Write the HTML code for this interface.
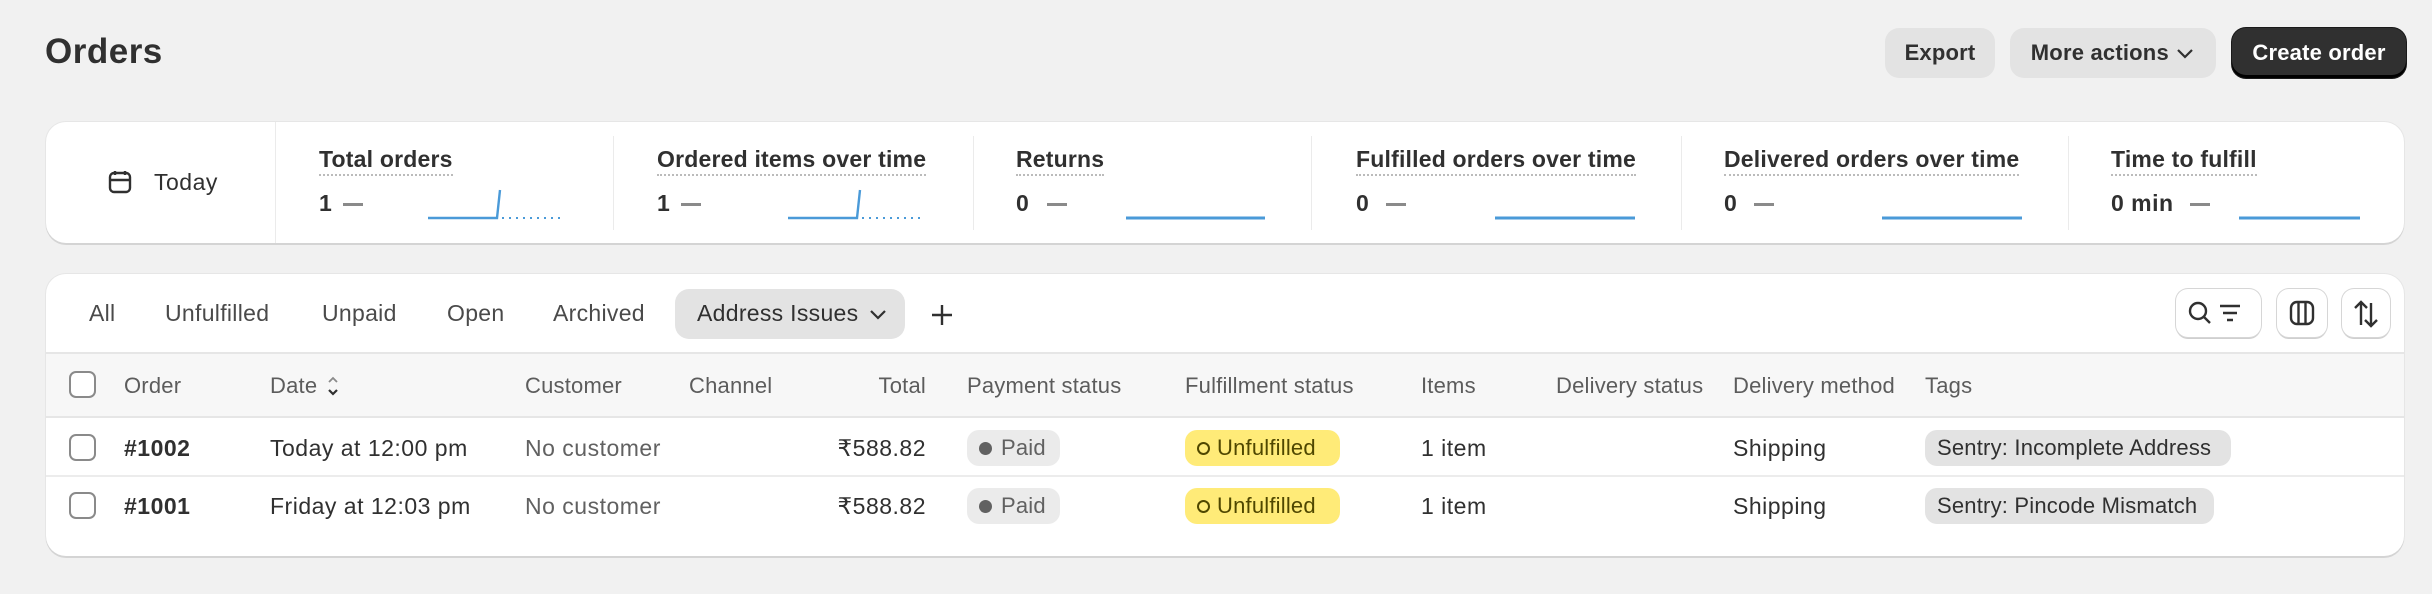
<!DOCTYPE html>
<html><head><meta charset="utf-8"><style>
*{box-sizing:border-box;margin:0;padding:0}
body{width:2432px;height:594px;background:#f1f1f1;font-family:"Liberation Sans",sans-serif;color:#303030;position:relative;overflow:hidden;letter-spacing:0.5px}
.a{position:absolute;white-space:nowrap}
.btn{position:absolute;top:28px;height:50px;border-radius:14px;background:#e3e3e3;font-size:22px;font-weight:bold;color:#303030;display:flex;align-items:center;justify-content:center;letter-spacing:0.2px}
.card{position:absolute;left:46px;width:2358px;background:#fff;border-radius:20px;box-shadow:0 2px 0 #d4d4d4,0 0 0 1px #e6e6e6}
.lab{position:absolute;top:147px;font-size:23px;font-weight:bold;color:#303030;border-bottom:2px dotted #bbb;padding-bottom:2px;line-height:25px;letter-spacing:0.2px}
.val{position:absolute;top:190px;font-size:23px;font-weight:bold;line-height:26px}
.dash{position:absolute;top:203px;width:20px;height:3px;background:#8a8a8a}
.div{position:absolute;top:136px;width:1px;height:94px;background:#ebebeb}
.tab{position:absolute;top:300px;font-size:23px;color:#4a4a4a;line-height:26px;letter-spacing:0.3px}
.th{position:absolute;top:373px;font-size:22px;color:#5c5c5c;line-height:26px;letter-spacing:0.2px}
.td{position:absolute;font-size:23px;color:#303030;line-height:26px}
.cb{position:absolute;left:69px;width:27px;height:27px;border:2px solid #8a8a8a;border-radius:7px;background:#fff}
.bdg{position:absolute;height:36px;border-radius:12px;font-size:22px;display:flex;align-items:center;padding:0 12px;letter-spacing:0.2px}
.ib{position:absolute;top:289px;height:48px;border-radius:12px;background:#fff;box-shadow:0 0 0 1px #d6d6d6,0 2px 0 #cfcfcf}
</style></head><body>
<div class="a" style="left:45px;top:32px;font-size:35px;font-weight:bold;color:#303030">Orders</div>
<div class="btn" style="left:1885px;width:110px">Export</div>
<div class="btn" style="left:2010px;width:206px">More actions&nbsp;<svg width="20" height="14" viewBox="0 0 20 14"><path d="M3 4l7 7 7-7" fill="none" stroke="#303030" stroke-width="2.2"/></svg></div>
<div class="btn" style="left:2232px;width:174px;background:#303030;color:#fff;box-shadow:inset 0 -3px 0 #000,0 0 0 1px #1a1a1a">Create order</div>

<div class="card" style="top:122px;height:121px"></div>
<div class="a" style="left:275px;top:122px;width:1px;height:121px;background:#ebebeb"></div>
<svg class="a" style="left:107px;top:169px" width="26" height="26" viewBox="0 0 26 26"><rect x="3" y="4" width="20" height="19" rx="4" fill="none" stroke="#303030" stroke-width="2.4"/><path d="M3 11h20M8 2v4M18 2v4" stroke="#303030" stroke-width="2.4"/></svg>
<div class="a" style="left:154px;top:169px;font-size:23px;color:#303030">Today</div>
<div class="div" style="left:613px"></div><div class="div" style="left:973px"></div><div class="div" style="left:1311px"></div><div class="div" style="left:1681px"></div><div class="div" style="left:2068px"></div>
<div class="lab" style="left:319px">Total orders</div>
<div class="lab" style="left:657px">Ordered items over time</div>
<div class="lab" style="left:1016px">Returns</div>
<div class="lab" style="left:1356px">Fulfilled orders over time</div>
<div class="lab" style="left:1724px">Delivered orders over time</div>
<div class="lab" style="left:2111px">Time to fulfill</div>
<div class="val" style="left:319px">1</div><div class="dash" style="left:343px"></div>
<div class="val" style="left:657px">1</div><div class="dash" style="left:681px"></div>
<div class="val" style="left:1016px">0</div><div class="dash" style="left:1047px"></div>
<div class="val" style="left:1356px">0</div><div class="dash" style="left:1386px"></div>
<div class="val" style="left:1724px">0</div><div class="dash" style="left:1754px"></div>
<div class="val" style="left:2111px">0 min</div><div class="dash" style="left:2190px"></div>
<svg class="a" style="left:0;top:0" width="2432" height="260">
<g stroke="#4a9ad8" fill="none" stroke-width="2.4">
<path d="M428 218H497L500 190"/><path d="M502 218H564" stroke-dasharray="2 5" stroke-width="2"/>
<path d="M788 218H857L860 190"/><path d="M862 218H924" stroke-dasharray="2 5" stroke-width="2"/>
<path d="M1126 218H1265M1495 218H1635M1882 218H2022M2239 218H2360" stroke-width="3"/>
</g></svg>

<div class="card" style="top:274px;height:282px;overflow:hidden">
<div style="position:absolute;left:0;top:78px;width:100%;height:66px;background:#f7f7f7;border-top:2px solid #e6e6e6;border-bottom:2px solid #e6e6e6"></div>
<div style="position:absolute;left:0;top:201px;width:100%;height:2px;background:#ececec"></div>
</div>
<div class="a" style="left:675px;top:289px;width:230px;height:50px;border-radius:14px;background:#e3e3e3"></div>
<div class="tab" style="left:89px">All</div>
<div class="tab" style="left:165px">Unfulfilled</div>
<div class="tab" style="left:322px">Unpaid</div>
<div class="tab" style="left:447px">Open</div>
<div class="tab" style="left:553px">Archived</div>
<div class="tab" style="left:697px;color:#303030">Address Issues</div>
<svg class="a" style="left:868px;top:307px" width="20" height="14" viewBox="0 0 20 14"><path d="M3 4l7 7 7-7" fill="none" stroke="#303030" stroke-width="2.2"/></svg>
<svg class="a" style="left:930px;top:303px" width="24" height="24"><path d="M12 2v20M2 12h20" stroke="#303030" stroke-width="2.4"/></svg>
<div class="ib" style="left:2176px;width:85px"></div>
<div class="ib" style="left:2277px;width:50px"></div>
<div class="ib" style="left:2342px;width:48px"></div>
<svg class="a" style="left:2184px;top:299px" width="70" height="28"><circle cx="14" cy="12" r="8" fill="none" stroke="#303030" stroke-width="2.4"/><path d="M20 18l6 6" stroke="#303030" stroke-width="2.4"/><path d="M36 7h20M39 14h14M43 21h6" stroke="#303030" stroke-width="2.4"/></svg>
<svg class="a" style="left:2288px;top:299px" width="28" height="28"><rect x="3" y="3" width="22" height="22" rx="6" fill="none" stroke="#303030" stroke-width="2.4"/><path d="M10.5 3v22M17.5 3v22" stroke="#303030" stroke-width="2.4"/></svg>
<svg class="a" style="left:2352px;top:299px" width="28" height="30"><path d="M9 26V3M3 9l6-6 6 6M19 4v23M13 21l6 6 6-6" fill="none" stroke="#303030" stroke-width="2.4"/></svg>

<div class="cb" style="top:371px"></div>
<div class="th" style="left:124px">Order</div>
<div class="th" style="left:270px">Date</div>
<svg class="a" style="left:326px;top:374px" width="14" height="24"><path d="M3 8l4-4 4 4" fill="none" stroke="#8a8a8a" stroke-width="1.8"/><path d="M3 16l4 4 4-4" fill="none" stroke="#303030" stroke-width="2.2"/></svg>
<div class="th" style="left:525px">Customer</div>
<div class="th" style="left:689px">Channel</div>
<div class="th" style="left:806px;width:120px;text-align:right">Total</div>
<div class="th" style="left:967px">Payment status</div>
<div class="th" style="left:1185px">Fulfillment status</div>
<div class="th" style="left:1421px">Items</div>
<div class="th" style="left:1556px">Delivery status</div>
<div class="th" style="left:1733px">Delivery method</div>
<div class="th" style="left:1925px">Tags</div>

<div class="cb" style="top:434px"></div>
<div class="td" style="left:124px;top:435px;font-weight:bold">#1002</div>
<div class="td" style="left:270px;top:435px">Today at 12:00 pm</div>
<div class="td" style="left:525px;top:435px;color:#616161">No customer</div>
<div class="td" style="left:786px;top:435px;width:140px;text-align:right">₹588.82</div>
<div class="bdg" style="left:967px;top:430px;width:93px;background:#ebebeb;color:#616161"><span style="display:inline-block;width:13px;height:13px;border-radius:50%;background:#616161;margin-right:9px"></span>Paid</div>
<div class="bdg" style="left:1185px;top:430px;width:155px;background:#ffeb78;color:#4f4700"><span style="display:inline-block;width:13px;height:13px;border-radius:50%;border:2px solid #4f4700;margin-right:7px"></span>Unfulfilled</div>
<div class="td" style="left:1421px;top:435px">1 item</div>
<div class="td" style="left:1733px;top:435px">Shipping</div>
<div class="bdg" style="left:1925px;top:430px;width:306px;background:#e3e3e3;color:#303030">Sentry: Incomplete Address</div>

<div class="cb" style="top:492px"></div>
<div class="td" style="left:124px;top:493px;font-weight:bold">#1001</div>
<div class="td" style="left:270px;top:493px">Friday at 12:03 pm</div>
<div class="td" style="left:525px;top:493px;color:#616161">No customer</div>
<div class="td" style="left:786px;top:493px;width:140px;text-align:right">₹588.82</div>
<div class="bdg" style="left:967px;top:488px;width:93px;background:#ebebeb;color:#616161"><span style="display:inline-block;width:13px;height:13px;border-radius:50%;background:#616161;margin-right:9px"></span>Paid</div>
<div class="bdg" style="left:1185px;top:488px;width:155px;background:#ffeb78;color:#4f4700"><span style="display:inline-block;width:13px;height:13px;border-radius:50%;border:2px solid #4f4700;margin-right:7px"></span>Unfulfilled</div>
<div class="td" style="left:1421px;top:493px">1 item</div>
<div class="td" style="left:1733px;top:493px">Shipping</div>
<div class="bdg" style="left:1925px;top:488px;width:289px;background:#e3e3e3;color:#303030">Sentry: Pincode Mismatch</div>
</body></html>
